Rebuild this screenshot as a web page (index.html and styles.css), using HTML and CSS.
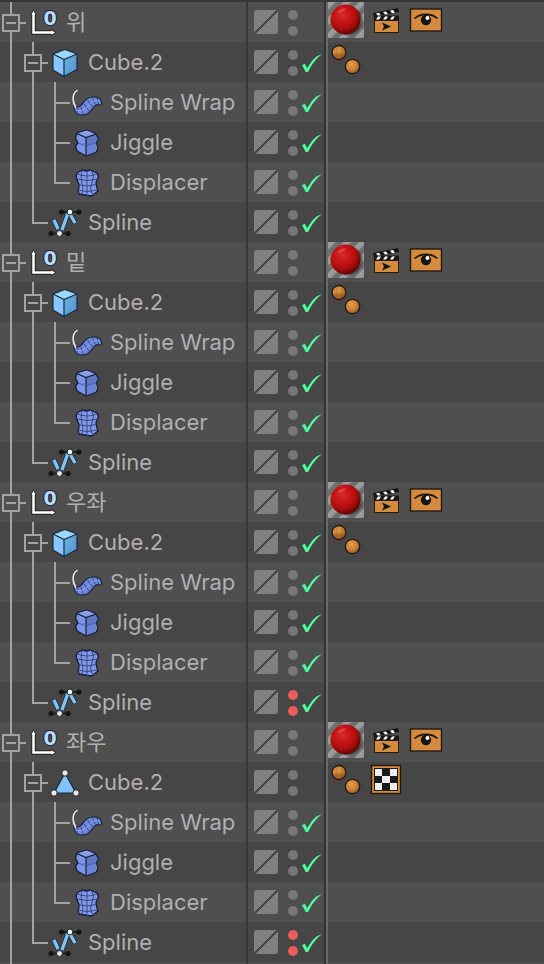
FILE: index.html
```html
<!DOCTYPE html>
<html lang="ko">
<head>
  <meta charset="utf-8">
  <meta name="viewport" content="width=device-width, initial-scale=1">
  <title>Object Manager</title>
  <link rel="stylesheet" href="styles.css">
</head>
<body>
  <svg class="defs" aria-hidden="true">
    <defs>
      <radialGradient id="redBall" cx="0.4" cy="0.35" r="0.65">
        <stop offset="0" stop-color="#d92a2a"/>
        <stop offset="0.4" stop-color="#c81616"/>
        <stop offset="0.75" stop-color="#a80c0c"/>
        <stop offset="1" stop-color="#5e0606"/>
      </radialGradient>
      <radialGradient id="orangeBall" cx="0.4" cy="0.35" r="0.7">
        <stop offset="0" stop-color="#e89c4a"/>
        <stop offset="0.6" stop-color="#c87f36"/>
        <stop offset="1" stop-color="#7c4a1a"/>
      </radialGradient>
      <linearGradient id="cubeSide" x1="0" y1="0" x2="1" y2="1">
        <stop offset="0" stop-color="#6db2e6"/>
        <stop offset="1" stop-color="#4f93c8"/>
      </linearGradient>
      <pattern id="stripes" width="11" height="11" patternUnits="userSpaceOnUse" patternTransform="rotate(45)">
        <rect width="11" height="11" fill="#6e6e6e"/>
        <rect width="5.500" height="11" fill="#9c9c9c"/>
      </pattern>
    </defs>

    <symbol id="null" viewBox="0 0 34 32">
      <path d="M7.500 7V26.500H26" fill="none" stroke="#222" stroke-width="4.500"/>
      <path d="M4.500 9l3-5 3 5zM25 23.500l5 3-5 3z" fill="#fff" stroke="#222"/>
      <path d="M7.500 7V26.500H26" fill="none" stroke="#fff" stroke-width="2.500"/>
    </symbol>

    <symbol id="cube" viewBox="0 0 34 32">
      <path d="M5 8v16l11 6.500V13.500z" fill="#86c8fb"/>
      <path d="M5 8l12-4.500L29 8l-13 5.500z" fill="#a0d6ff"/>
      <path d="M16 13.500L29 8v15.500L16 30.500z" fill="url(#cubeSide)"/>
      <path d="M5 8l12-4.500L29 8v15.500L16 30.500 5 24zM5 8l11 5.500L29 8M16 13.500v17" fill="none" stroke="#172a3a" stroke-width="1.200" stroke-linejoin="round"/>
    </symbol>

    <symbol id="poly" viewBox="0 0 34 32">
      <path d="M17 7L28 27H6z" fill="#80c4fb" stroke="#1c2833" stroke-width="1.200"/>
      <g fill="#e8e8e8" stroke="#222">
        <circle cx="17" cy="7" r="3.200"/>
        <circle cx="6" cy="27" r="3.200"/>
        <circle cx="28" cy="27" r="3.200"/>
      </g>
    </symbol>

    <symbol id="wrap" viewBox="0 0 34 32">
      <path d="M4 20c-1 4 2 9 8 9 6 0 8-3 11-7 2-3 4-4 7-3 2 0 2-2 1-4-1-3-4-4-8-4-5 0-8 3-10 6-2 2-3 4-5 4-2 0-3-1-4-1z" fill="#7189dc" stroke="#1c2340" stroke-width="1.200" stroke-linejoin="round"/>
      <path d="M8.500 21.500l-2 5M11 21l2 7M14 18l5 7M17.500 14l5 7M22 11.500l3.500 7M27 12l1.500 6.500" fill="none" stroke="#34437e" stroke-width="0.900"/>
      <path d="M7 24c6 2 9-1 12-5s6-5 11-4" fill="none" stroke="#94a8ee" stroke-width="0.900"/>
      <path d="M7 4.500C2 8 2 15 5.500 21" fill="none" stroke="#eee" stroke-width="1.500" stroke-linecap="round"/>
    </symbol>

    <symbol id="jiggle" viewBox="0 0 34 32">
      <path d="M7 7l10-3 9 4 2.500 5-2.500 4 2 4-1.500 5L16 30l-9-5-1.500-5L8 17l-2.500-5z" fill="#7b95e6" stroke="#171d33" stroke-width="1.300" stroke-linejoin="round"/>
      <path d="M7.500 7.500L17 4.500l8.500 3.700L16 11.500z" fill="#88a0ee"/>
      <path d="M16 11.500l9.500-3.300 2 4.800-2.500 4-9 3z" fill="#5f76c4"/>
      <path d="M16 20l9-3 2.300 4-1.600 4.500L16 29z" fill="#6a82d2"/>
      <path d="M7 7.500l9 4 10-3.500M16 11.500V29" fill="none" stroke="#171d33" stroke-width="1.200"/>
      <path d="M8 17l8 3 9-3" fill="none" stroke="#485ca6"/>
    </symbol>

    <symbol id="displace" viewBox="0 0 34 32">
      <path d="M7 7l5-3 4 1 4-1 7 3q3 4-1 9 0 4 2 9l-6 5-5-.5-8-1.500-1-4q2-5 0-8-3-5-1-9z" fill="#7e98ea" stroke="#171d33" stroke-width="1.300" stroke-linejoin="round"/>
      <path d="M7 8q10 4 20 0M7 13q10 3 20 0M8 18.500q9 3 18 0M8 24q9 3 19 0M12 4q-2 7 0 13t0 11M17 5v25M22 5q3 6 0 12t1 12" fill="none" stroke="#33427c" stroke-width="0.900"/>
    </symbol>

    <symbol id="spline" viewBox="0 0 34 32">
      <path d="M6 14l4 9M14 24l6-17M22 8l5 9" fill="none" stroke="#242424" stroke-width="4.800"/>
      <path d="M6 14l4 9M14 24l6-17M22 8l5 9" fill="none" stroke="#7cc6fb" stroke-width="3.400"/>
      <path d="M3 27.500h17M13 6h18" stroke="#151515" stroke-width="1.500"/>
      <g fill="#151515">
        <circle cx="3" cy="27.500" r="2.600"/>
        <circle cx="20" cy="27.500" r="2.600"/>
        <circle cx="13.500" cy="6" r="2.600"/>
        <circle cx="31" cy="6" r="2.600"/>
      </g>
      <g fill="#f0f0f0" stroke="#222">
        <circle cx="11.500" cy="27.500" r="2.900"/>
        <circle cx="22" cy="6" r="2.900"/>
      </g>
    </symbol>

    <symbol id="material" viewBox="0 0 36 36">
      <rect width="36" height="36" fill="url(#stripes)"/>
      <circle cx="19.500" cy="18.500" r="15" fill="#2a1414" opacity="0.450"/>
      <circle cx="17.500" cy="17.500" r="15" fill="url(#redBall)"/>
      <path d="M9 11q3-5 9-5-2 5-9 5z" fill="#f08080" opacity="0.350"/>
    </symbol>

    <symbol id="render" viewBox="0 0 36 36">
      <path d="M5 11L30 6l1 4L6 15z" fill="#161616"/>
      <path d="M8 11.400l3-.6 2 2.600-3 .6zM15 10l3-.6 2 2.600-3 .6zM22 8.600l3-.6 2 2.600-3 .6z" fill="#fff"/>
      <rect x="6" y="13.500" width="25" height="5" fill="#161616"/>
      <path d="M10 14.500h3l-2 3H8zM17 14.500h3l-2 3h-3zM24 14.500h3l-2 3h-3z" fill="#fff"/>
      <rect x="6.500" y="18.500" width="24" height="12" fill="#d48b3e" stroke="#2b1c0d"/>
      <path d="M14 20.500l9 4-9 4 2-4z" fill="#161616"/>
    </symbol>

    <symbol id="display" viewBox="0 0 36 36">
      <rect x="2.500" y="7" width="31" height="22" fill="#d48b3e" stroke="#221a12" stroke-width="1.400"/>
      <path d="M6.500 16.500c6-5.500 17-5.500 23 0" fill="none" stroke="#1a140e" stroke-width="1.600"/>
      <circle cx="18" cy="18" r="5.200" fill="#161616"/>
      <circle cx="19.500" cy="16" r="2" fill="#fff"/>
    </symbol>

    <symbol id="phong" viewBox="0 0 36 36">
      <g stroke="#221a12" stroke-width="1.300">
        <circle cx="11" cy="10.500" r="7" fill="url(#orangeBall)"/>
        <circle cx="24.500" cy="24.500" r="7.200" fill="url(#orangeBall)"/>
      </g>
      <path d="M5 11.500h12v1q-2 4-6 4.500-4-.5-6-4.500z" fill="#8a5525" opacity="0.500"/>
      <path d="M9 4.500v12M14 5v11" stroke="#9c6028" stroke-width="0.600"/>
    </symbol>

    <symbol id="uvw" viewBox="0 0 36 36">
      <rect x="3.500" y="3.500" width="29" height="28" fill="#d48b3e" stroke="#221a12" stroke-width="1.400"/>
      <rect x="6" y="6" width="24" height="23" fill="#1a1a1a"/>
      <path d="M7 7h7v7H7zM22 7h7v7h-7zM14 14h8v7h-8zM7 21h7v7H7zM22 21h7v7h-7z" fill="#eee"/>
    </symbol>
  </svg>

  <main class="manager">
    <ul class="tree" id="tree"></ul>
    <div class="row filler">
      <div class="object"><span class="guide line"></span></div>
      <div class="states"></div>
      <div class="tags"></div>
    </div>
  </main>

  <script>
    const groups = [
      { name: '위' },
      { name: '밑' },
      { name: '우좌', hidden: true },
      { name: '좌우', hidden: true, polygon: true }
    ];

    const tagNames = {
      material: 'Material',
      render: 'Render',
      display: 'Display',
      phong: 'Phong',
      uvw: 'UVW'
    };

    // guides: line = passes through, tee = branch, end = last branch, open = branch with a fold button
    function groupRows(group) {
      return [
        { name: group.name, icon: 'null', digit: '0', guides: ['open'], tags: ['material', 'render', 'display'] },
        {
          name: 'Cube.2',
          icon: group.polygon ? 'poly' : 'cube',
          guides: ['line', 'open'],
          check: !group.polygon,
          tags: group.polygon ? ['phong', 'uvw'] : ['phong']
        },
        { name: 'Spline Wrap', icon: 'wrap', guides: ['line', 'line', 'tee'], check: true },
        { name: 'Jiggle', icon: 'jiggle', guides: ['line', 'line', 'tee'], check: true },
        { name: 'Displacer', icon: 'displace', guides: ['line', 'line', 'end'], check: true },
        { name: 'Spline', icon: 'spline', guides: ['line', 'end'], check: true, off: group.hidden }
      ];
    }

    function guide(type) {
      const fold = type === 'open' ? '<button class="fold" aria-label="Collapse"></button>' : '';
      return `<span class="guide ${type}">${fold}</span>`;
    }

    function icon(item) {
      const digit = item.digit ? `<text class="null-digit" x="24" y="19" text-anchor="middle">${item.digit}</text>` : '';
      return `<svg class="icon" viewBox="0 0 34 32" aria-hidden="true"><use href="#${item.icon}"/>${digit}</svg>`;
    }

    function tag(id) {
      return `<button class="tag" aria-label="${tagNames[id]}"><svg><use href="#${id}"/></svg></button>`;
    }

    function row(item) {
      return `
        <li class="row">
          <div class="object">
            ${item.guides.map(guide).join('')}
            ${icon(item)}
            <span class="name">${item.name}</span>
          </div>
          <div class="states">
            <button class="layer" aria-label="Layer"></button>
            <button class="dots ${item.off ? 'off' : ''}" aria-label="Visibility"><i></i><i></i></button>
            ${item.check ? `<input class="check" type="checkbox" aria-label="Enable ${item.name}" checked>` : ''}
          </div>
          <div class="tags">${(item.tags || []).map(tag).join('')}</div>
        </li>`;
    }

    document.getElementById('tree').innerHTML = groups.flatMap(groupRows).map(row).join('');
  </script>
</body>
</html>
```
FILE: styles.css
```css
* {
  box-sizing: border-box;
}

body {
  margin: 0;
  background: #4f4f4f;
  color: #b0b0b0;
  font-family: Inter, "Noto Sans CJK KR", sans-serif;
  font-size: 22px;
}

button {
  padding: 0;
  border: none;
  background: none;
  cursor: pointer;
}

.defs {
  position: absolute;
  width: 0;
  height: 0;
}

.manager {
  display: flex;
  flex-direction: column;
  min-height: 100vh;
  border-top: 2px solid #363636;
}

.tree {
  margin: 0;
  padding: 0;
  list-style: none;
}

.row {
  display: grid;
  grid-template-columns: 248px 78px 1fr;
  height: 40px;
  background: #4f4f4f;
}

.row:nth-child(even) {
  background: #464646;
}

.row.filler {
  flex: 1;
  height: auto;
  background: #4f4f4f;
}

.object {
  display: flex;
  align-items: center;
  border-right: 2px solid #383838;
  white-space: nowrap;
}

.name {
  line-height: 38px;
}

/* tree guides */
.guide {
  --ink: linear-gradient(#a3a3a3, #a3a3a3);
  flex: none;
  align-self: stretch;
  width: 22px;
  background-repeat: no-repeat;
}

.line {
  background-image: var(--ink);
  background-position: 10px 0;
  background-size: 2px 100%;
}

.tee,
.end {
  width: 26px;
  background-image: var(--ink), var(--ink);
  background-position: 10px 0, 10px 20px;
  background-size: 2px 100%, 16px 2px;
}

.end {
  background-size: 2px 22px, 16px 2px;
}

.open {
  width: 26px;
  padding: 12px 0 0 2px;
  background-image: var(--ink), var(--ink), var(--ink);
  background-position: 10px 0, 20px 20px, 10px 30px;
  background-size: 2px 12px, 6px 2px, 2px 10px;
}

.fold {
  display: block;
  width: 18px;
  height: 18px;
  border: 2px solid #a3a3a3;
  background: linear-gradient(#a3a3a3, #a3a3a3) center / 10px 2px no-repeat;
}

.icon {
  flex: none;
  width: 34px;
  height: 32px;
  margin-right: 6px;
}

.null-digit {
  font-family: "DejaVu Sans", sans-serif;
  font-size: 19px;
  font-weight: bold;
  fill: #b5dcff;
  stroke: #222;
  stroke-width: 2px;
  paint-order: stroke;
}

.states {
  display: flex;
  align-items: center;
  padding-left: 6px;
  border-right: 2px solid #333;
}

.layer {
  width: 24px;
  height: 24px;
  border-radius: 3px;
  background: linear-gradient(135deg, #818181 47%, #464646 47%, #464646 53%, #818181 53%);
}

.dots {
  display: flex;
  flex-direction: column;
  gap: 6px;
  margin: 2px 4px 0 10px;
}

.dots i {
  width: 10px;
  height: 10px;
  border-radius: 50%;
  background: #777;
}

.dots.off i {
  background: #e95c5c;
}

.check {
  appearance: none;
  width: 20px;
  height: 18px;
  margin: 2px 0 0;
  cursor: pointer;
}

.check:checked {
  background: #4dfa99;
  clip-path: polygon(0 62%, 14% 54%, 26% 78%, 50% 38%, 72% 14%, 100% 0, 74% 26%, 50% 60%, 30% 100%, 19% 100%);
}

.tags {
  display: flex;
  gap: 4px;
  border-left: 2px solid #686868;
}

.tag,
.tag svg {
  display: block;
  width: 36px;
  height: 36px;
}
```
